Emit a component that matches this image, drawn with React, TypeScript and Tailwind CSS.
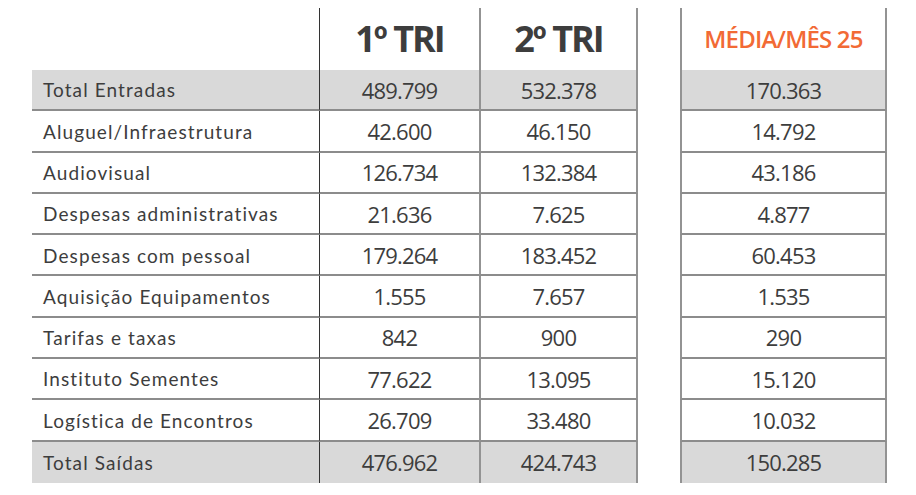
import React from "react";

type Row = { label: string; a: string; b: string; m: string; total?: boolean };

const rows: Row[] = [
  { label: "Total Entradas", a: "489.799", b: "532.378", m: "170.363", total: true },
  { label: "Aluguel/Infraestrutura", a: "42.600", b: "46.150", m: "14.792" },
  { label: "Audiovisual", a: "126.734", b: "132.384", m: "43.186" },
  { label: "Despesas administrativas", a: "21.636", b: "7.625", m: "4.877" },
  { label: "Despesas com pessoal", a: "179.264", b: "183.452", m: "60.453" },
  { label: "Aquisição Equipamentos", a: "1.555", b: "7.657", m: "1.535" },
  { label: "Tarifas e taxas", a: "842", b: "900", m: "290" },
  { label: "Instituto Sementes", a: "77.622", b: "13.095", m: "15.120" },
  { label: "Logística de Encontros", a: "26.709", b: "33.480", m: "10.032" },
  { label: "Total Saídas", a: "476.962", b: "424.743", m: "150.285", total: true },
];

export default function App() {
  return (
    <div className="w-[916px] h-[495px] bg-white pt-[8px] pl-[32px] text-[#3d3d3d] font-['Open_Sans','Noto_Sans',sans-serif]">
      <div className="flex h-[62px]">
        <div className="w-[287px]" />
        <div className="w-[160px] border-l border-[#333] flex items-center justify-center text-[36px] font-bold tracking-[-2px]">
          1º TRI
        </div>
        <div className="w-[159px] border-l-2 border-r-2 border-[#939393] flex items-center justify-center text-[36px] font-bold tracking-[-2px]">
          2º TRI
        </div>
        <div className="w-[42px]" />
        <div className="w-[207px] border-l-2 border-r-2 border-[#939393] flex items-center justify-center text-[24px] font-semibold tracking-[-0.8px] text-[#f26a35]">
          MÉDIA/MÊS 25
        </div>
      </div>
      {rows.map((r, i) => {
        const last = i === rows.length - 1;
        const bg = r.total ? "bg-[#d9d9d9]" : "bg-white";
        const bb = last ? "" : "border-b-2 border-b-[#8c8c8c]";
        return (
          <div key={r.label} className="flex h-[41.3px]">
            <div
              className={`w-[287px] ${bg} ${bb} flex items-center pl-[11px] pt-[2px] text-[19px] tracking-[1.1px] font-['Lato','Noto_Sans',sans-serif]`}
            >
              {r.label}
            </div>
            <div
              className={`w-[160px] ${bg} ${bb} border-l border-l-[#333] flex items-center justify-center pt-[1px] text-[22px] tracking-[-0.8px]`}
            >
              {r.a}
            </div>
            <div
              className={`w-[159px] ${bg} ${bb} border-l-2 border-r-2 border-l-[#939393] border-r-[#939393] flex items-center justify-center pt-[1px] text-[22px] tracking-[-0.8px]`}
            >
              {r.b}
            </div>
            <div className="w-[42px]" />
            <div
              className={`w-[207px] ${bg} ${bb} border-l-2 border-r-2 border-l-[#939393] border-r-[#939393] flex items-center justify-center pt-[1px] text-[22px] tracking-[-0.8px]`}
            >
              {r.m}
            </div>
          </div>
        );
      })}
    </div>
  );
}
